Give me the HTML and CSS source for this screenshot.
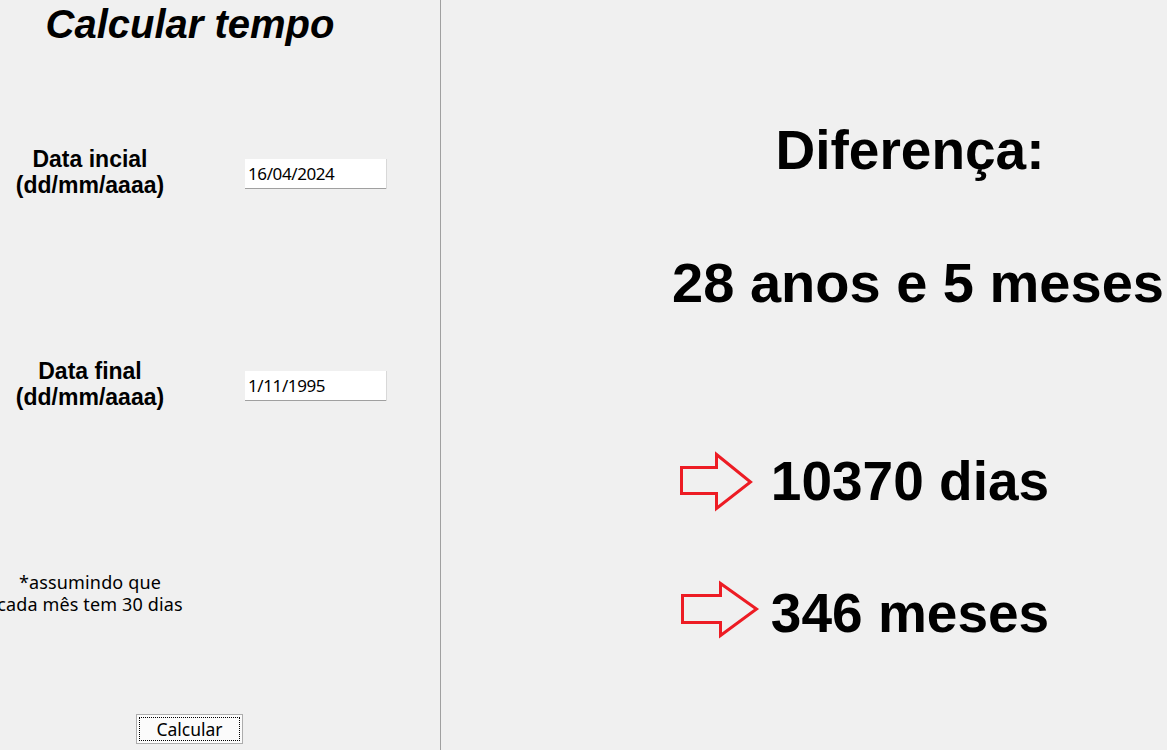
FILE: index.html
```html
<!DOCTYPE html>
<html lang="pt">
<head>
<meta charset="utf-8">
<title>Calcular tempo</title>
<link rel="stylesheet" href="styles.css">
</head>
<body>
<div class="app">
  <section class="left">
    <h1 class="title">Calcular tempo</h1>
    <div class="field field-start">
      <label class="field-label" for="ini">Data incial<br>(dd/mm/aaaa)</label>
      <input id="ini" class="field-input" type="text" value="16/04/2024">
    </div>
    <div class="field field-end">
      <label class="field-label" for="fim">Data final<br>(dd/mm/aaaa)</label>
      <input id="fim" class="field-input" type="text" value="1/11/1995">
    </div>
    <div class="note">
      <span>*assumindo que</span>
      <span>cada mês tem 30 dias</span>
    </div>
    <button class="btn" type="button"><span class="btn-focus">Calcular</span></button>
  </section>
  <section class="right">
    <div class="heading">Diferença:</div>
    <div class="result-main">28 anos e 5 meses</div>
    <div class="result-row result-days">
      <svg class="arrow" width="84" height="64" viewBox="0 0 84 64">
        <polygon points="4.5,18.5 39.5,18.5 39.5,5.5 73.5,33 39.5,59.5 39.5,44.5 4.5,44.5" fill="none" stroke="#ed1c24" stroke-width="3" stroke-linejoin="miter"/>
      </svg>
      <span class="result-text">10370 dias</span>
    </div>
    <div class="result-row result-months">
      <svg class="arrow" width="84" height="64" viewBox="0 0 84 64">
        <polygon points="5.5,14.5 43.5,14.5 43.5,2.5 79.5,28 43.5,54.5 43.5,41.5 5.5,41.5" fill="none" stroke="#ed1c24" stroke-width="3" stroke-linejoin="miter"/>
      </svg>
      <span class="result-text">346 meses</span>
    </div>
  </section>
</div>
</body>
</html>
```
FILE: styles.css
```css
html, body {
  margin: 0;
  padding: 0;
}

body {
  background: #f0f0f0;
  color: #000;
  width: 1167px;
  height: 750px;
  overflow: hidden;
  font-family: "Liberation Sans", Arial, sans-serif;
}

.app {
  display: flex;
  height: 750px;
}

.left {
  flex: none;
  width: 440px;
  border-right: 1px solid #a0a0a0;
  display: flex;
  flex-direction: column;
}

.title {
  margin: 1px 0 0;
  width: 380px;
  text-align: center;
  font-family: "Liberation Sans", Arial, sans-serif;
  font-style: italic;
  font-weight: bold;
  font-size: 40px;
  line-height: 46px;
}

.field {
  display: flex;
  align-items: flex-start;
}

.field-start {
  margin-top: 99px;
}

.field-end {
  margin-top: 160px;
}

.field-label {
  width: 180px;
  text-align: center;
  font-weight: bold;
  font-size: 23px;
  line-height: 26px;
}

.field-input {
  margin: 13px 0 0 65px;
  width: 141px;
  height: 30px;
  box-sizing: border-box;
  padding: 0 3px;
  border: none;
  border-bottom: 1px solid #a0a0a0;
  box-shadow: 1px 0 0 #d8d8d8;
  background: #fff;
  font-family: "Noto Sans", "Open Sans", sans-serif;
  font-size: 17px;
  letter-spacing: -0.4px;
  color: #000;
  outline: none;
}

.note {
  margin-top: 161px;
  width: 180px;
  display: flex;
  flex-direction: column;
  align-items: center;
  font-family: "Noto Sans", "Open Sans", sans-serif;
  font-size: 18px;
  line-height: 22px;
  letter-spacing: 0.15px;
  white-space: nowrap;
}

.btn {
  margin: 99px 0 0 136px;
  width: 107px;
  height: 30px;
  padding: 2px;
  box-sizing: border-box;
  border: 1px solid #adadad;
  background: #fbfbfb;
  font-family: "Noto Sans", "Open Sans", sans-serif;
  font-size: 17.5px;
  color: #000;
  display: flex;
}

.btn-focus {
  flex: 1;
  border: 1px dotted #000;
  display: flex;
  align-items: center;
  justify-content: center;
  line-height: 22px;
}

.right {
  flex: 1;
  display: flex;
  flex-direction: column;
  align-items: center;
  padding: 118px 0 0 212px;
  font-weight: bold;
  font-size: 55px;
  line-height: 64px;
  white-space: nowrap;
}

.result-main {
  margin: 69px 0 0 16px;
  font-size: 56px;
}

.result-row {
  display: flex;
  align-items: flex-start;
  gap: 10px;
  margin-right: 94px;
}

.result-days {
  margin-top: 134px;
}

.result-months {
  margin-top: 68px;
}

.arrow {
  flex: none;
  display: block;
  overflow: visible;
}
```
